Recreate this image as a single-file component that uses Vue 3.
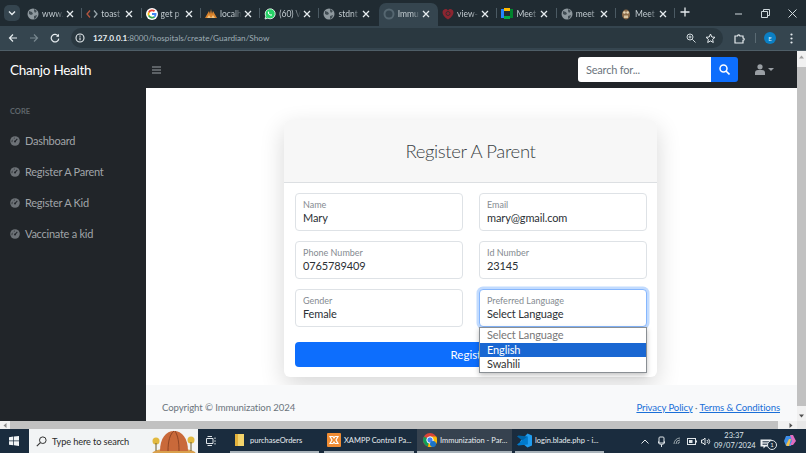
<script setup>
const tabs = [
  { icon: 'globe', text: 'www.' },
  { icon: 'code', text: 'toast' },
  { icon: 'g', text: 'get p' },
  { icon: 'local', text: 'localh' },
  { icon: 'wa', text: '(60) V' },
  { icon: 'globe', text: 'stdnt' },
  { icon: 'load', text: 'Immu', active: true },
  { icon: 'view', text: 'view-' },
  { icon: 'meet', text: 'Meet' },
  { icon: 'globe', text: 'meet' },
  { icon: 'owl', text: 'Meet' },
]
const nav = ['Dashboard', 'Register A Parent', 'Register A Kid', 'Vaccinate a kid']
const rows = [
  [{ label: 'Name', value: 'Mary' }, { label: 'Email', value: 'mary@gmail.com' }],
  [{ label: 'Phone Number', value: '0765789409' }, { label: 'Id Number', value: '23145' }],
  [{ label: 'Gender', value: 'Female' }, { label: 'Preferred Language', value: 'Select Language', focus: true }],
]
</script>

<template>
  <div class="screen">
    <div class="tabstrip">
      <div class="chev">
        <svg width="8" height="6" viewBox="0 0 8 6"><path d="M1 1.5l3 3 3-3" fill="none" stroke="#e6ecef" stroke-width="1.4" /></svg>
      </div>
      <div class="tabs">
        <div v-for="(t, i) in tabs" :key="i" class="tab" :class="{ active: t.active, nosep: t.active || (tabs[i + 1] && tabs[i + 1].active) }">
          <span class="fav">
            <svg v-if="t.icon === 'globe'" width="12" height="12" viewBox="0 0 12 12"><circle cx="6" cy="6" r="5.5" fill="#8e989e" /><path d="M2 3l3 1 1 2-2 1-2-1zM7 1l3 2-2 2-1-2zM7 8l3-1-1 3-2 1z" fill="#414c53" /></svg>
            <svg v-else-if="t.icon === 'code'" width="12" height="10" viewBox="0 0 12 10"><path d="M4 1.5L1 5l3 3.5" fill="none" stroke="#b5563f" stroke-width="1.3" /><path d="M8 1.5L11 5 8 8.5" fill="none" stroke="#9aa6ac" stroke-width="1.3" /></svg>
            <svg v-else-if="t.icon === 'g'" width="12" height="12" viewBox="0 0 12 12"><circle cx="6" cy="6" r="6" fill="#fff" /><path d="M6 3.2a2.8 2.8 0 0 1 1.9.7l1.3-1.3A4.6 4.6 0 0 0 2 4l1.5 1.1A2.8 2.8 0 0 1 6 3.2z" fill="#ea4335" /><path d="M3.3 6c0-.3 0-.6.2-.9L2 4a4.6 4.6 0 0 0 0 4l1.5-1.1c-.1-.3-.2-.6-.2-.9z" fill="#fbbc05" /><path d="M6 8.8a2.8 2.8 0 0 1-2.5-1.9L2 8a4.6 4.6 0 0 0 7.100 1.400L7.700 8.300A2.800 2.800 0 0 1 6 8.800z" fill="#34a853" /><path d="M10.500 6c0-.3 0-.6-.1-.9H6v1.800h2.500a2.100 2.100 0 0 1-.8 1.400l1.400 1.100A4.500 4.500 0 0 0 10.500 6z" fill="#4285f4" /></svg>
            <svg v-else-if="t.icon === 'local'" width="12" height="11" viewBox="0 0 12 11"><path d="M0 10L4 3l1 3 1-5 1 5 1-3 4 7z" fill="#d9822b" /><path d="M2 10l2-3 2 3 2-3 2 3z" fill="#f1c27d" /></svg>
            <svg v-else-if="t.icon === 'wa'" width="12" height="12" viewBox="0 0 12 12"><path d="M1 11l.8-2.800A5 5 0 1 1 3.800 10.200z" fill="#25d366" stroke="#fff" stroke-width=".8" /><path d="M4 3.800c.5-.6 1-.2 1.200.6.100.4-.4.6-.3.900.3.600.8 1 1.400 1.300.3.100.5-.4.900-.3.800.2 1.100.8.500 1.300C6.300 8.500 3 5.500 4 3.800z" fill="#fff" /></svg>
            <svg v-else-if="t.icon === 'load'" width="12" height="12" viewBox="0 0 12 12"><circle cx="6" cy="6" r="4.500" fill="none" stroke="#556670" stroke-width="2" /></svg>
            <svg v-else-if="t.icon === 'view'" width="12" height="12" viewBox="0 0 12 12"><path d="M6 11.500C2 9 .5 6.500 .5 4A3 3 0 0 1 6 2.500 3 3 0 0 1 11.500 4c0 2.500-1.500 5-5.500 7.500z" fill="#8c2530" /><circle cx="6" cy="5.500" r="2" fill="none" stroke="#3b2a30" /></svg>
            <svg v-else-if="t.icon === 'meet'" width="12" height="11" viewBox="0 0 12 11"><rect x="0" y="1" width="4" height="9" fill="#2684fc" /><rect x="3" y="0" width="6" height="3" fill="#ffba00" /><rect x="3" y="8" width="6" height="3" fill="#00ac47" /><rect x="9" y="1" width="3" height="9" fill="#00832d" /><rect x="3" y="3" width="6" height="5" fill="#202b32" /></svg>
            <svg v-else width="10" height="12" viewBox="0 0 10 12"><ellipse cx="5" cy="6.500" rx="4" ry="5" fill="#8b6b4a" /><circle cx="3.400" cy="4.500" r="1.300" fill="#e5d5b5" /><circle cx="6.600" cy="4.500" r="1.300" fill="#e5d5b5" /><rect x="3" y="7.500" width="4" height="2.500" fill="#d7c4a0" /></svg>
          </span>
          <span class="tabtext">{{ t.text }}</span>
          <svg class="tabx" width="8" height="8" viewBox="0 0 8 8"><path d="M1 1l6 6M7 1L1 7" stroke="#e6ecef" stroke-width="1.300" /></svg>
        </div>
      </div>
      <svg class="plus" width="10" height="10" viewBox="0 0 10 10"><path d="M5 .5v9M.5 5h9" stroke="#e6ecef" stroke-width="1.300" /></svg>
      <div class="winctl">
        <svg width="9" height="9" viewBox="0 0 9 9"><path d="M1 5h7" stroke="#cfd8dc" /></svg>
        <svg width="9" height="9" viewBox="0 0 9 9"><path d="M.5 2.500h6v6h-6zM2.500 2.500V.5h6v6h-2" fill="none" stroke="#cfd8dc" /></svg>
        <svg width="9" height="9" viewBox="0 0 9 9"><path d="M.5.5l8 8M8.500.5l-8 8" stroke="#cfd8dc" /></svg>
      </div>
    </div>

    <div class="toolbar">
      <svg class="tb back" width="10" height="10" viewBox="0 0 10 10"><path d="M9 5H1.500M5 1.500L1.500 5 5 8.500" fill="none" stroke="#e6ecef" stroke-width="1.200" /></svg>
      <svg class="tb fwd" width="10" height="10" viewBox="0 0 10 10"><path d="M1 5h7.500M5 1.500L8.500 5 5 8.500" fill="none" stroke="#78878f" stroke-width="1.200" /></svg>
      <svg class="tb reload" width="10" height="10" viewBox="0 0 10 10"><path d="M8.300 3.200A3.800 3.800 0 1 0 8.800 5.600" fill="none" stroke="#e6ecef" stroke-width="1.200" /><path d="M9 .8v3H6z" fill="#e6ecef" /></svg>
      <div class="omni">
        <svg class="info" width="10" height="10" viewBox="0 0 10 10"><circle cx="5" cy="5" r="4" fill="none" stroke="#e6ecef" stroke-width="1.100" /><path d="M5 4.500v2.800M5 2.600v1.100" stroke="#e6ecef" stroke-width="1.100" /></svg>
        <span class="url"><b>127.0.0.1</b>:8000/hospitals/create/Guardian/Show</span>
        <span class="omni-r">
          <svg width="10" height="10" viewBox="0 0 10 10"><circle cx="4" cy="4" r="3" fill="none" stroke="#cfd8dc" /><path d="M6.300 6.300L9.500 9.500M2.500 4h3M4 2.500v3" stroke="#cfd8dc" /></svg>
          <svg width="11" height="11" viewBox="0 0 11 11"><path d="M5.500 1l1.300 3 3.200.3-2.400 2.100.7 3.100-2.800-1.600-2.800 1.600.7-3.100L1 4.300 4.200 4z" fill="none" stroke="#e6ecef" /></svg>
        </span>
      </div>
      <svg class="ext" width="11" height="11" viewBox="0 0 11 11"><path d="M1 3h2.500a1.200 1.200 0 0 1 2.400 0H9v2a1.200 1.200 0 0 1 0 2.400V10H1z" fill="none" stroke="#e6ecef" stroke-width="1.200" /></svg>
      <span class="tbsep"></span>
      <span class="avatar">E</span>
      <svg class="dots" width="3" height="11" viewBox="0 0 3 11"><circle cx="1.500" cy="1.500" r="1.100" fill="#e6ecef" /><circle cx="1.500" cy="5.500" r="1.100" fill="#e6ecef" /><circle cx="1.500" cy="9.500" r="1.100" fill="#e6ecef" /></svg>
    </div>

    <div class="viewport">
      <div class="page">
        <header class="topnav">
          <div class="brand">Chanjo Health</div>
          <svg class="burger" width="9" height="8" viewBox="0 0 9 8"><path d="M0 1h9M0 4h9M0 7h9" stroke="#9a9fa4" stroke-width="1.200" /></svg>
          <div class="search">
            <span class="search-in">Search for...</span>
            <span class="search-btn">
              <svg width="11" height="11" viewBox="0 0 11 11"><circle cx="4.500" cy="4.500" r="3.500" fill="none" stroke="#fff" stroke-width="1.500" /><path d="M7 7l3.500 3.500" stroke="#fff" stroke-width="1.600" /></svg>
            </span>
          </div>
          <div class="user">
            <svg width="10" height="11" viewBox="0 0 10 11"><circle cx="5" cy="2.800" r="2.600" fill="#9a9fa4" /><path d="M0 11V9a3 3 0 0 1 3-3h4a3 3 0 0 1 3 3v2z" fill="#9a9fa4" /></svg>
            <span class="caret"></span>
          </div>
        </header>
        <div class="under">
          <aside class="sidebar">
            <div class="core">CORE</div>
            <div v-for="n in nav" :key="n" class="navitem">
              <svg width="10" height="10" viewBox="0 0 10 10"><circle cx="5" cy="5" r="4.800" fill="#6d7277" /><path d="M5 5.500L7.300 2.800" stroke="#212529" stroke-width="1.100" /><circle cx="5" cy="5.600" r="1" fill="#212529" /><path d="M2 6.200a3 3 0 0 1 .6-2.500M3.800 2.300a3 3 0 0 1 1.200-.2" fill="none" stroke="#212529" stroke-width=".7" /></svg>
              <span>{{ n }}</span>
            </div>
          </aside>
          <main class="main">
            <div class="content">
              <section class="card">
                <h3 class="card-h">Register A Parent</h3>
                <div class="card-b">
                  <div v-for="(r, i) in rows" :key="i" class="row">
                    <div v-for="f in r" :key="f.label" class="field" :class="{ focus: f.focus }">
                      <label class="lab">{{ f.label }}</label>
                      <div class="val">{{ f.value }}</div>
                      <div v-if="f.focus" class="popup">
                        <div class="opt muted">Select Language</div>
                        <div class="opt sel">English</div>
                        <div class="opt">Swahili</div>
                      </div>
                    </div>
                  </div>
                  <div class="submit">Register</div>
                </div>
              </section>
            </div>
            <footer class="foot">
              <span>Copyright © Immunization 2024</span>
              <span class="links"><a>Privacy Policy</a> · <a>Terms &amp; Conditions</a></span>
            </footer>
          </main>
        </div>
      </div>
      <div class="vscroll">
        <svg width="5" height="4" viewBox="0 0 5 4"><path d="M2.500 .5L5 3.500H0z" fill="#a0a0a0" /></svg>
        <div class="vthumb"></div>
        <svg width="5" height="4" viewBox="0 0 5 4"><path d="M2.500 3.500L0 .5h5z" fill="#505050" /></svg>
      </div>
    </div>

    <div class="hscroll">
      <svg class="hl" width="4" height="5" viewBox="0 0 4 5"><path d="M.5 2.500L3.500 0v5z" fill="#8a8a8a" /></svg>
      <div class="hthumb"></div>
      <svg class="hr" width="4" height="5" viewBox="0 0 4 5"><path d="M3.500 2.500L.5 0v5z" fill="#505050" /></svg>
      <span class="corner"></span>
    </div>

    <div class="taskbar">
      <svg class="win" width="10" height="10" viewBox="0 0 10 10"><path d="M0 1.300l4.300-.7v4H0zM5 .5L10 0v4.600H5zM0 5.300h4.300v4L0 8.700zM5 5.300h5V10l-5-.7z" fill="#f2f5f7" /></svg>
      <div class="tsearch">
        <svg width="11" height="11" viewBox="0 0 11 11"><circle cx="6.800" cy="4.200" r="3.300" fill="none" stroke="#333" /><path d="M4.400 6.600L.8 10.200" stroke="#333" stroke-width="1.100" /></svg>
        <span>Type here to search</span>
        <svg class="rock" width="46" height="24" viewBox="0 0 46 24"><ellipse cx="23" cy="25" rx="22" ry="6" fill="#d9a04d" /><path d="M9 22c0-13 6-20 14-20s14 7 14 20z" fill="#c9693a" /><path d="M17 22c0-10 2-17 6-20M28 22c0-9-1-15-4-20" stroke="#8e4424" fill="none" /><circle cx="5" cy="12" r="3.500" fill="#e2b93f" /><circle cx="40" cy="11" r="3.500" fill="#e2b93f" /><path d="M5 14v8M40 13v9" stroke="#6b5a2c" /></svg>
      </div>
      <svg class="taskview" width="11" height="10" viewBox="0 0 11 10"><path d="M.5 2.500h6.500v5H.5zM9 1.500v1.500M9 4.300v1.500M9 7v1.500M1.500.5h4.500M1.500 9.500h4.500" fill="none" stroke="#dfe5e9" /></svg>
      <div class="titem t-folder">
        <svg width="9" height="12" viewBox="0 0 9 12"><path d="M0 0h9v12H0z" fill="#f3d36b" /><path d="M0 0h3v12H0z" fill="#e3b23c" /></svg>
        <span class="tlabel">purchaseOrders</span>
      </div>
      <div class="titem t-xampp">
        <svg width="14" height="14" viewBox="0 0 14 14"><rect width="14" height="14" rx="1" fill="#f08c33" /><path d="M3 3.500h3l1 1.500 1-1.500h3L9 7l2 3.500H8L7 9l-1 1.500H3L5 7z" fill="none" stroke="#fff" stroke-width="1.200" /></svg>
        <span class="tlabel">XAMPP Control Pa...</span>
      </div>
      <div class="titem t-chrome">
        <svg width="14" height="14" viewBox="0 0 14 14"><circle cx="7" cy="7" r="7" fill="#db4437" /><path d="M7 7L1 3.500A7 7 0 0 0 5 13.700z" fill="#0f9d58" /><path d="M7 3.500h6.200A7 7 0 0 1 5 13.700z" fill="#fbbc05" /><circle cx="7" cy="7" r="3.200" fill="#4285f4" stroke="#fff" /><circle cx="10" cy="11" r="3" fill="#1a73c8" /></svg>
        <span class="tlabel">Immunization - Par...</span>
      </div>
      <div class="titem t-code">
        <svg width="15" height="15" viewBox="0 0 15 15"><path d="M10.500 .5L15 2.500v10l-4.500 2L3 8.500z" fill="#1f9cf0" /><path d="M10.500 3.500v8L0 3.500 1.500 2.500z" fill="#0065a9" /><path d="M10.500 11.500L1.500 12.500 0 11.500 10.500 3.500z" fill="#007acc" /></svg>
        <span class="tlabel">login.blade.php - i...</span>
      </div>
      <div class="tray">
        <svg width="8" height="5" viewBox="0 0 8 5"><path d="M.5 4.500L4 1l3.500 3.500" fill="none" stroke="#e6ecef" /></svg>
        <svg class="t2" width="7" height="11" viewBox="0 0 7 11"><rect x="1" y="1" width="5" height="6" rx="1" fill="none" stroke="#dfe5e9" /><path d="M0 5a3.500 3.500 0 0 0 7 0M3.500 8.500V11" fill="none" stroke="#dfe5e9" /></svg>
        <svg class="t3" width="8" height="8" viewBox="0 0 8 8"><path d="M1 7a6 6 0 0 1 6-6M3 7a4 4 0 0 1 4-4M5 7a2 2 0 0 1 2-2" fill="none" stroke="#9aa6ac" /></svg>
        <svg class="t4" width="10" height="7" viewBox="0 0 10 7"><rect x=".5" y=".5" width="8" height="6" fill="none" stroke="#dfe5e9" /><rect x="2" y="2" width="3.500" height="3" fill="#dfe5e9" /><path d="M9.500 2.500v2" stroke="#dfe5e9" /></svg>
        <svg class="t5" width="10" height="9" viewBox="0 0 10 9"><path d="M.5 3h1.500L4 1v7L2 6H.5z" fill="none" stroke="#dfe5e9" /><path d="M6 3a2 2 0 0 1 0 3M7.500 1.800a4 4 0 0 1 0 5.400" fill="none" stroke="#dfe5e9" /></svg>
      </div>
      <div class="clock"><div>23:37</div><div>09/07/2024</div></div>
      <div class="notif">
        <svg width="13" height="11" viewBox="0 0 13 11"><path d="M.5.500h11v7h-6l-2 2v-2h-3z" fill="#eef1f3" /><path d="M2.500 2.500h7M2.500 4h7M2.500 5.500h5" stroke="#1a2b3f" stroke-width=".7" /></svg>
        <span class="badge">1</span>
      </div>
      <svg class="copilot" width="14" height="14" viewBox="0 0 14 14"><path d="M3 2h5l2 5-2 5H3L1 7z" fill="#3f8fe8" /><path d="M7 1h3l3 6-3 4H7l2-4z" fill="#e06cc0" /><path d="M3 11l3-6h2l-2 7H4z" fill="#f2c14e" /></svg>
    </div>
  </div>
</template>

<style scoped>
.screen { width: 806px; height: 453px; display: flex; flex-direction: column; overflow: hidden; font-family: Lato, "Noto Sans", sans-serif; color: #212529; background: #fff; }
svg { flex: none; }
.tabstrip { height: 26px; flex: none; display: flex; align-items: center; background: #202b32; position: relative; }
.chev { width: 16px; height: 16px; margin-left: 4px; margin-right: 3px; border-radius: 5px; background: #35454f; display: flex; align-items: center; justify-content: center; }
.tabs { display: flex; height: 23px; align-self: flex-end; }
.tab { width: 59.300px; display: flex; align-items: center; position: relative; color: #c3ccd1; font-size: 8.500px; padding-bottom: 2px; box-sizing: border-box; }
.tab::after { content: ""; position: absolute; right: 0; top: 5px; height: 10px; width: 1px; background: #4b5a63; }
.tab.nosep::after { display: none; }
.tab.active { background: #35454f; border-radius: 7px 7px 0 0; }
.fav { width: 12px; margin-left: 4px; display: flex; justify-content: center; flex: none; }
.tabtext { margin-left: 3px; width: 22px; overflow: hidden; white-space: nowrap; -webkit-mask-image: linear-gradient(90deg, #000 65%, transparent); mask-image: linear-gradient(90deg, #000 65%, transparent); }
.tabx { margin-left: 2px; }
.plus { margin-left: 5px; margin-bottom: 2px; }
.winctl { margin-left: auto; display: flex; gap: 18px; margin-right: 9px; }
.toolbar { height: 25px; flex: none; display: flex; align-items: center; background: #35454f; border-bottom: 1px solid #4f5e67; box-sizing: border-box; }
.back { margin-left: 8px; }
.fwd { margin-left: 11px; }
.reload { margin-left: 11px; }
.omni { margin-left: 11px; width: 652px; height: 20px; border-radius: 10px; background: #2a3840; display: flex; align-items: center; box-sizing: border-box; padding: 0 7px 0 4px; flex: none; }
.url { margin-left: 8px; font-size: 8.200px; color: #9fadb5; }
.url b { font-weight: 700; color: #e6ecef; }
.omni-r { margin-left: auto; display: flex; gap: 9px; align-items: center; }
.ext { margin-left: 11px; }
.tbsep { width: 1px; height: 10px; background: #5a6a73; margin-left: 10px; flex: none; }
.avatar { width: 12px; height: 12px; border-radius: 50%; background: #0b7fc4; color: #d9f0ff; font-size: 6px; display: flex; align-items: center; justify-content: center; margin-left: 8px; flex: none; }
.dots { margin-left: 14px; }
.viewport { height: 370px; flex: none; display: flex; }
.page { width: 797px; flex: none; display: flex; flex-direction: column; }
.topnav { height: 37px; flex: none; background: #212529; display: flex; align-items: center; }
.brand { width: 146px; box-sizing: border-box; padding-left: 10px; color: #fff; font-size: 13.500px; letter-spacing: -.25px; white-space: nowrap; }
.burger { margin-left: 6px; }
.search { margin-left: auto; display: flex; height: 25px; }
.search-in { width: 133px; background: #fff; border-radius: 3px 0 0 3px; box-sizing: border-box; padding-left: 8px; font-size: 11px; letter-spacing: -.2px; line-height: 25px; color: #6c757d; }
.search-btn { width: 27px; background: #0d6efd; border-radius: 0 3px 3px 0; display: flex; align-items: center; justify-content: center; }
.user { width: 59px; box-sizing: border-box; padding-left: 17px; display: flex; align-items: center; gap: 3px; }
.caret { border-top: 3px solid #9a9fa4; border-left: 3px solid transparent; border-right: 3px solid transparent; }
.under { flex: 1; display: flex; min-height: 0; }
.sidebar { width: 146px; flex: none; background: #212529; box-sizing: border-box; padding-top: 18px; color: #a0a4a8; }
.core { padding-left: 10px; font-size: 7.500px; font-weight: 700; color: #5f656b; height: 11px; line-height: 11px; margin-bottom: 8px; }
.navitem { height: 31px; display: flex; align-items: center; gap: 5px; padding-left: 10px; font-size: 11px; letter-spacing: -.25px; white-space: nowrap; }
.main { flex: 1; display: flex; flex-direction: column; min-width: 0; }
.content { flex: 1; display: flex; justify-content: center; padding-top: 32px; box-sizing: border-box; padding-right: 2px; min-height: 0; }
.card { width: 373px; height: 257px; border-radius: 6px; background: #fff; box-shadow: 0 8px 24px rgba(0, 0, 0, .16); overflow: visible; }
.card-h { height: 63px; margin: 0; box-sizing: border-box; border-bottom: 1px solid #dcdfe2; background: #f7f7f7; border-radius: 6px 6px 0 0; text-align: center; font-weight: 300; font-size: 18.500px; letter-spacing: -.35px; line-height: 62px; color: #3a3f44; }
.card-b { padding: 10px 10.500px 0 11px; }
.row { display: flex; gap: 16px; margin-bottom: 10px; }
.field { width: 168px; height: 38px; box-sizing: border-box; border: 1px solid #dee2e6; border-radius: 4px; padding: 5px 7px 0; position: relative; flex: none; background: #fff; }
.field.focus { border-color: #86b7fe; box-shadow: 0 0 0 2.500px rgba(13, 110, 253, .25); }
.lab { display: block; font-size: 9px; line-height: 12px; color: #858b91; white-space: nowrap; }
.val { font-size: 11px; letter-spacing: -.12px; line-height: 14px; color: #2b3035; white-space: nowrap; }
.popup { position: absolute; left: -1px; top: 37px; width: 168px; height: 46px; box-sizing: border-box; background: #fff; border: 1px solid #8a8f94; box-shadow: 0 2px 5px rgba(0, 0, 0, .25); z-index: 2; }
.opt { height: 14.700px; line-height: 14.700px; padding-left: 7px; font-size: 11px; letter-spacing: -.12px; color: #333; }
.opt.muted { color: #777; }
.opt.sel { background: #1967d2; color: #fff; }
.submit { margin-top: 15px; width: 352px; height: 25px; background: #0d6efd; color: #fff; border-radius: 4px; text-align: center; line-height: 25px; font-size: 11.500px; }
.foot { height: 36px; flex: none; background: #f8f9fa; display: flex; align-items: center; justify-content: space-between; padding: 8px 17px 0 16px; box-sizing: border-box; font-size: 9.600px; letter-spacing: -.1px; color: #6c757d; }
.links a { color: #1a6fd8; text-decoration: underline; }
.vscroll { width: 9px; flex: none; background: #f1f1f1; display: flex; flex-direction: column; align-items: center; justify-content: space-between; padding: 4px 0 3px; box-sizing: border-box; }
.vthumb { width: 9px; flex: 1; margin: 2px 0 2px; background: #c1c1c1; max-height: 339px; }
.hscroll { height: 8px; flex: none; background: #f1f1f1; display: flex; align-items: center; padding-left: 3px; box-sizing: border-box; }
.hthumb { width: 768px; height: 8px; margin-left: 3px; background: #c1c1c1; flex: none; }
.hr { margin-left: 11px; }
.corner { width: 9px; height: 8px; margin-left: auto; background: #e8e8e8; }
.taskbar { height: 24px; flex: none; background: #1a2c3e; display: flex; align-items: center; color: #e8edf1; }
.win { margin-left: 9px; }
.tsearch { margin-left: 10px; width: 169px; height: 24px; background: #f2f4f5; color: #2a2a2a; display: flex; align-items: center; box-sizing: border-box; padding-left: 7px; gap: 5px; font-size: 9.200px; letter-spacing: -.1px; overflow: hidden; position: relative; flex: none; white-space: nowrap; }
.rock { position: absolute; right: 1px; top: 0; }
.taskview { margin-left: 8px; }
.titem { height: 24px; box-sizing: border-box; display: flex; align-items: center; border-bottom: 2px solid #aab4bb; gap: 3px; flex: none; font-size: 7.500px; white-space: nowrap; overflow: hidden; padding-left: 3px; }
.t-folder { margin-left: 13px; width: 89px; padding-left: 5px; gap: 6px; }
.t-xampp { margin-left: 5px; width: 90px; }
.t-chrome { margin-left: 3px; width: 95px; padding-left: 6px; background: #36424f; }
.t-code { margin-left: 3px; width: 89px; padding-left: 2px; }
.tray { margin-left: 37px; display: flex; align-items: center; flex: none; }
.t2 { margin-left: 9px; }
.t3 { margin-left: 8px; }
.t4 { margin-left: 6px; }
.t5 { margin-left: 4px; }
.clock { margin-left: 3px; width: 40px; text-align: center; font-size: 7.500px; line-height: 10px; color: #dfe5e9; flex: none; white-space: nowrap; }
.notif { margin-left: 6px; position: relative; width: 14px; height: 14px; flex: none; }
.badge { position: absolute; right: -3px; bottom: -2px; width: 8px; height: 8px; border-radius: 50%; border: 1px solid #dfe5e9; background: #1a2c3e; font-size: 6px; line-height: 8px; text-align: center; }
.copilot { margin-left: 9px; }
</style>
